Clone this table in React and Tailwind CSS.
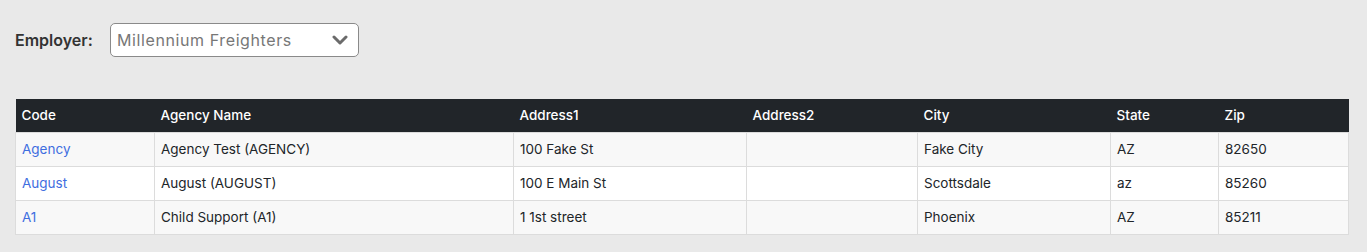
import { useState } from "react";

export default function App() {
  const [employer] = useState("Millennium Freighters");

  const rows = [
    { code: "Agency", name: "Agency Test (AGENCY)", address1: "100 Fake St", address2: "", city: "Fake City", state: "AZ", zip: "82650" },
    { code: "August", name: "August (AUGUST)", address1: "100 E Main St", address2: "", city: "Scottsdale", state: "az", zip: "85260" },
    { code: "A1", name: "Child Support (A1)", address1: "1 1st street", address2: "", city: "Phoenix", state: "AZ", zip: "85211" }
  ];

  const cols = [
    { label: "Code", w: "w-[139px]" },
    { label: "Agency Name", w: "w-[359px]" },
    { label: "Address1", w: "w-[233px]" },
    { label: "Address2", w: "w-[171px]" },
    { label: "City", w: "w-[193px]" },
    { label: "State", w: "w-[108px]" },
    { label: "Zip", w: "w-[130px]" }
  ];

  return (
    <div className="min-h-screen bg-[#e9e9e9] pl-[15px] pr-[19px] pt-[23px] font-['Inter',sans-serif] text-[#212529]">
      {/* employer picker */}
      <div className="flex items-center">
        <span className="w-[95px] text-[16px] font-semibold text-[#333]">Employer:</span>
        <div className="flex h-[34px] w-[249px] items-center justify-between rounded-[5px] border border-[#8a8a8a] bg-white pl-[6px] pr-[10px]">
          <span className="text-[16px] tracking-[0.6px] text-[#777]">{employer}</span>
          <svg width="16" height="10" viewBox="0 0 16 10" fill="none">
            <path d="M2 2l6 6 6-6" stroke="#6b6b6b" strokeWidth="3" strokeLinecap="round" strokeLinejoin="round" />
          </svg>
        </div>
      </div>

      {/* agencies */}
      <table className="mt-[42px] w-full table-fixed border-collapse text-[13.5px]">
        <thead>
          <tr className="h-[33px] bg-[#212529] text-white">
            {cols.map((c) => (
              <th key={c.label} className={`${c.w} px-[6px] text-left font-medium`}>
                {c.label}
              </th>
            ))}
          </tr>
        </thead>
        <tbody>
          {rows.map((r, i) => (
            <tr key={r.code} className={i % 2 === 0 ? "h-[34px] bg-[#f8f8f8]" : "h-[34px] bg-white"}>
              <td className="border border-[#dcdcdc] px-[6px] text-[#3f6ee0]">{r.code}</td>
              <td className="border border-[#dcdcdc] px-[6px]">{r.name}</td>
              <td className="border border-[#dcdcdc] px-[6px]">{r.address1}</td>
              <td className="border border-[#dcdcdc] px-[6px]">{r.address2}</td>
              <td className="border border-[#dcdcdc] px-[6px]">{r.city}</td>
              <td className="border border-[#dcdcdc] px-[6px]">{r.state}</td>
              <td className="border border-[#dcdcdc] px-[6px]">{r.zip}</td>
            </tr>
          ))}
        </tbody>
      </table>
    </div>
  );
}
